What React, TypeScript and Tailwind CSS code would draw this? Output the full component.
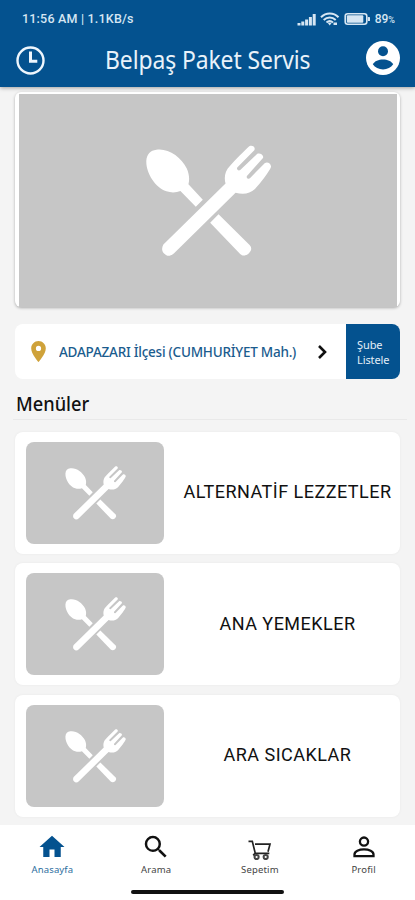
import { MdHome, MdLocationOn, MdSearch } from "react-icons/md";

const MENUS = ["ALTERNATİF LEZZETLER", "ANA YEMEKLER", "ARA SICAKLAR"];

const Cutlery = ({ className }: { className: string }) => (
  <svg viewBox="47 46 374 334" className={className} fill="#fff">
    <path d="M78 60C112 54 153 82 169 116c7 16 9 31 5 47l43 46-21 21-46-47c-12 5-27 6-42 1C74 173 46 128 48 92c2-19 12-30 30-32z" />
    <path d="M264 253l93 92c8 9 5 17-2 24-8 8-19 10-27 2l-89-93z" />
    <path d="M356 49c9-5 20 3 15 12l-51 52c-3 6 4 11 9 7l51-48c7-5 21 4 17 12l-48 54c-3 6 4 11 9 7l44-45c8-6 20 1 19 11-3 10-32 49-48 66-15 14-35 18-58 11L131 369c-9 9-21 11-29 2-9-8-8-19-3-28L285 161c-5-18-2-38 13-53 17-19 44-46 58-59z" />
  </svg>
);

const Clock = () => (
  <svg viewBox="0 0 29 29" className="size-[29px]" fill="none" stroke="#eef6fd">
    <circle cx="14.5" cy="14.5" r="13" strokeWidth="2.4" />
    <path d="M14.5 5.5v9.8h6.8" strokeWidth="3" />
  </svg>
);

const Account = () => (
  <svg viewBox="0 0 34 34" className="size-[34px]" fill="#04528f">
    <circle cx="17" cy="17" r="17" fill="#fff" />
    <circle cx="17" cy="10.2" r="5" />
    <path d="M6.800 23.300c1.800-3.400 5.800-4.900 10.200-4.900s8.400 1.500 10.200 4.900c-2.200 3.300-6 5.200-10.200 5.200s-8-1.900-10.200-5.200z" />
  </svg>
);

const StatusIcons = () => (
  <svg viewBox="0 0 78 16" className="h-4 w-[78px]" fill="#d6e6f3">
    <path d="M.500 12h3v2.500h-3zM4.300 10.500h3v4h-3zM8.100 8.500h3v6h-3zM11.900 6h3v8.500h-3zM15.700 3h3v11.500h-3z" />
    <g fill="none" stroke="#d6e6f3" strokeWidth="2">
      <path d="M24 6.200c5-5 12.500-5 17.500 0" />
      <path d="M26.700 9c3.500-3.300 8.500-3.300 12 0" />
      <path d="M29.500 11.500c2-1.800 4.500-1.800 6.500 0" />
    </g>
    <path d="M30.500 11.500H35L32.700 14.500zM36.500 11.500H40V14h-3.500z" />
    <rect x="48.200" y="2.700" width="21.600" height="10.600" rx="2.500" fill="none" stroke="#d6e6f3" strokeWidth="1.600" />
    <rect x="49.800" y="4.300" width="16.500" height="7.400" rx="1" />
    <rect x="70.800" y="6" width="2.200" height="4" rx="0.600" />
  </svg>
);

const Cart = () => (
  <svg viewBox="0 0 24 20" className="h-5 w-6" fill="none" stroke="#222" strokeWidth="1.700">
    <path d="M.5 1.400h3.800l3 12h14M7 4.200h15l-2 7.600" />
    <path d="M7 13.400l-1.800 2" />
    <circle cx="8.600" cy="17" r="2.100" strokeWidth="2" stroke="#444" />
    <circle cx="17.700" cy="17" r="2.100" strokeWidth="2" stroke="#444" />
  </svg>
);

const Person = () => (
  <svg viewBox="0 0 22 22" className="size-[22px]" fill="none" stroke="#111" strokeWidth="2.300">
    <circle cx="11" cy="5.600" r="4.100" />
    <path d="M1.500 20.200v-1.800c0-3 4.500-5 9.500-5s9.500 2 9.500 5v1.800z" />
  </svg>
);

const TABS = [
  { label: "Anasayfa", icon: <MdHome size={30} color="#04528f" />, color: "text-[#2c6e9e]" },
  { label: "Arama", icon: <MdSearch size={30} color="#111" />, color: "text-[#444]" },
  { label: "Sepetim", icon: <span className="pl-px pt-[5px]"><Cart /></span>, color: "text-[#444]" },
  { label: "Profil", icon: <span className="pl-px"><Person /></span>, color: "text-[#444]" },
];

const App = () => {
  return (
    <main className="flex h-[900px] w-[415px] flex-col overflow-hidden bg-[#f4f4f4] font-['Noto_Sans',sans-serif]">
      <header className="relative h-[87px] shrink-0 bg-[#04528f] shadow-[0_1px_4px_rgba(0,0,0,0.35)]">
        <div className="flex h-[38px] items-center justify-between pl-[22px] pr-5 font-['Roboto',sans-serif] text-[12.500px] font-medium text-[#d6e6f3]">
          <span className="whitespace-nowrap tracking-[0.200px]">11:56 AM | 1.1KB/s</span>
          <div className="flex items-center">
            <StatusIcons />
            <span className="whitespace-nowrap text-[12px]">
              89<span className="text-[9px]">%</span>
            </span>
          </div>
        </div>
        <div className="flex h-11 items-center justify-between pl-4 pr-[15px]">
          <Clock />
          <h1 className="origin-center scale-x-[0.935] whitespace-nowrap pl-[4px] text-[24.500px] tracking-[-0.100px] text-[#e9f2fa]">
            Belpaş Paket Servis
          </h1>
          <div className="pb-[5px]">
            <Account />
          </div>
        </div>
      </header>

      <section className="mx-[15px] mt-[5px] h-[215px] shrink-0 rounded-md bg-white pl-1 pr-[3px] pt-[2px] shadow-[0_1px_3px_rgba(0,0,0,0.3)]">
        <div className="flex h-[213px] items-center justify-center bg-[#c6c6c6]">
          <Cutlery className="h-[112px] w-[125px]" />
        </div>
      </section>

      <section className="mx-[15px] mt-[17px] flex h-[55px] shrink-0 overflow-hidden rounded-lg bg-white">
        <div className="flex flex-1 items-center pl-[11px]">
          <MdLocationOn size={25} color="#cfa23a" />
          <p className="ml-2 w-[246px] origin-left scale-x-[0.965] whitespace-nowrap text-[14px] font-medium tracking-[-0.250px] text-[#1b5c8e]">
            ADAPAZARI İlçesi (CUMHURİYET Mah.)
          </p>
          <svg viewBox="0 0 12 16" className="ml-3 h-4 w-3" fill="none" stroke="#111" strokeWidth="2.600">
            <path d="M2 2l6 6-6 6" />
          </svg>
        </div>
        <button className="w-[54px] bg-[#04528f] pl-[11px] text-left text-[11px] leading-[15px] tracking-[-0.100px] text-[#e3eef7]">
          Şube
          <br />
          Listele
        </button>
      </section>

      <h2 className="ml-[13px] mr-2 h-[41px] shrink-0 border-b border-[#e9e9e9] pl-[3px] pt-[9px] text-[20.500px] font-medium leading-[30px] text-[#111]">
        <span className="inline-block origin-left scale-x-[0.890]">Menüler</span>
      </h2>

      <section className="mx-[15px] mt-[11.500px] flex flex-1 flex-col gap-[9.500px]">
        {MENUS.map((menu) => (
          <div key={menu} className="flex h-[122px] shrink-0 items-center rounded-lg bg-white pl-[11px] shadow-[0_0_3px_rgba(0,0,0,0.05)]">
            <div className="flex h-[102px] w-[138px] shrink-0 items-center justify-center rounded-lg bg-[#c6c6c6]">
              <Cutlery className="h-[54px] w-[61px]" />
            </div>
            <p className="flex-1 whitespace-nowrap pb-[2px] pl-[11px] text-center font-['Roboto',sans-serif] text-[18px] tracking-[0.480px] text-[#111]">
              {menu}
            </p>
          </div>
        ))}
      </section>

      <nav className="flex h-[75px] shrink-0 flex-col bg-white">
        <div className="flex h-[65px] pt-[7px]">
          {TABS.map(({ label, icon, color }) => (
            <div key={label} className="flex flex-1 flex-col items-center">
              <div className="flex h-[30px] items-center">{icon}</div>
              <span className={`pl-px pt-px text-[9.500px] leading-[14px] tracking-[0.150px] ${color}`}>{label}</span>
            </div>
          ))}
        </div>
        <div className="mx-auto h-1 w-[153px] rounded-full bg-[#111]" />
      </nav>
    </main>
  );
};

export default App;
